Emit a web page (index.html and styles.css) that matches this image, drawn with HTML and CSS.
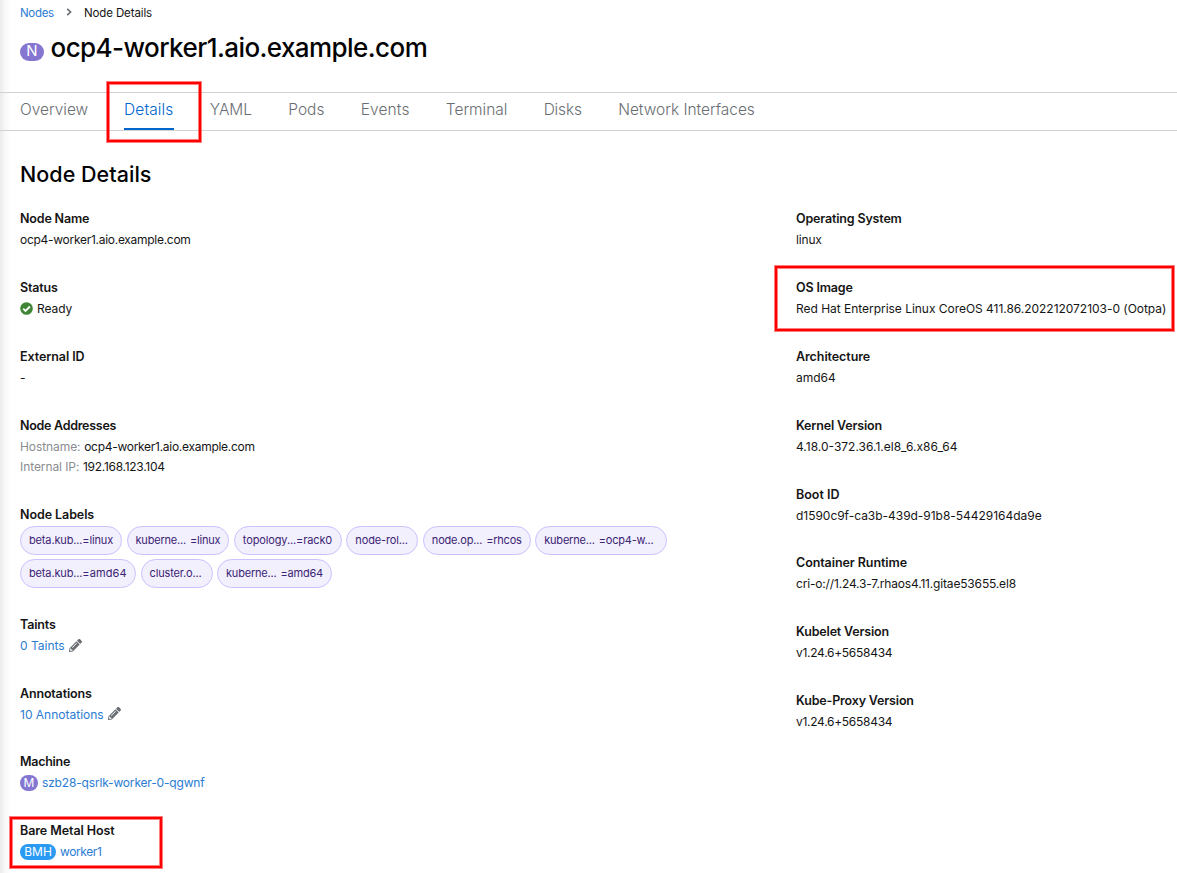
FILE: index.html
```html
<!DOCTYPE html>
<html lang="en">
<head>
<meta charset="utf-8">
<title>ocp4-worker1.aio.example.com - Details</title>
<link rel="stylesheet" href="styles.css">
</head>
<body>
<svg class="defs" width="0" height="0">
  <symbol id="pencil" viewBox="0 0 512 512"><path d="M497.9 142.1l-46.1 46.1c-4.7 4.7-12.3 4.7-17 0l-111-111c-4.7-4.7-4.7-12.3 0-17l46.1-46.1c18.7-18.7 49.1-18.7 67.9 0l60.1 60.1c18.8 18.7 18.8 49.1 0 67.9zM284.2 99.8L21.6 362.4.4 483.9c-2.9 16.4 11.4 30.6 27.8 27.8l121.5-21.3 262.6-262.6c4.7-4.7 4.7-12.3 0-17l-111-111c-4.8-4.7-12.4-4.7-17.1 0zM124.1 339.9c-5.5-5.5-5.5-14.3 0-19.8l154-154c5.5-5.5 14.3-5.5 19.8 0s5.5 14.3 0 19.8l-154 154c-5.5 5.5-14.3 5.5-19.8 0zM88 424h48v36.3l-64.5 11.3-31.1-31.1L51.7 376H88v48z"/></symbol>
</svg>
<main class="page">
  <nav class="breadcrumb">
    <a class="link">Nodes</a>
    <svg class="chevron" viewBox="0 0 6 8"><path d="M1.2 .8 4.6 4 1.2 7.2"/></svg>
    <span>Node Details</span>
  </nav>
  <header class="title">
    <span class="badge badge-lg">N</span>
    <h1>ocp4-worker1.aio.example.com</h1>
  </header>
  <nav class="tabs">
    <a class="tab">Overview</a>
    <a class="tab active">Details</a>
    <a class="tab">YAML</a>
    <a class="tab">Pods</a>
    <a class="tab events">Events</a>
    <a class="tab">Terminal</a>
    <a class="tab disks">Disks</a>
    <a class="tab">Network Interfaces</a>
  </nav>
  <h2>Node Details</h2>
  <div class="columns">
    <dl class="col-left">
      <div class="item"><dt>Node Name</dt><dd class="ls3">ocp4-worker1.aio.example.com</dd></div>
      <div class="item"><dt>Status</dt><dd class="ls1 row">
        <svg class="check" viewBox="0 0 13 13"><circle cx="6.5" cy="6.5" r="6.3"/><path d="M3.2 6.7 5.5 9 9.9 4.5"/></svg><span>Ready</span></dd></div>
      <div class="item"><dt class="ls1">External ID</dt><dd>-</dd></div>
      <div class="item addresses"><dt class="ls3">Node Addresses</dt>
        <dd><span class="muted ls1">Hostname:</span><span class="ls3">ocp4-worker1.aio.example.com</span></dd>
        <dd><span class="muted ls1">Internal IP:</span><span class="ls3">192.168.123.104</span></dd></div>
      <div class="item labels"><dt class="ls1">Node Labels</dt>
        <dd class="chips">
          <span class="chip"><b>beta.kub...</b><i>=linux</i></span>
          <span class="chip gap"><b>kuberne...</b><i>=linux</i></span>
          <span class="chip topology"><b>topology...</b><i>=rack0</i></span>
          <span class="chip wide"><b>node-rol...</b></span>
          <span class="chip gap"><b>node.op...</b><i>=rhcos</i></span>
          <span class="chip gap long"><b>kuberne...</b><i>=ocp4-w...</i></span>
        </dd>
        <dd class="chips">
          <span class="chip amd"><b>beta.kub...</b><i>=amd64</i></span>
          <span class="chip wide"><b>cluster.o...</b></span>
          <span class="chip gap"><b>kuberne...</b><i>=amd64</i></span>
        </dd></div>
      <div class="item"><dt>Taints</dt><dd class="row link">0 Taints<svg class="pencil"><use href="#pencil"/></svg></dd></div>
      <div class="item"><dt>Annotations</dt><dd class="row link">10 Annotations<svg class="pencil"><use href="#pencil"/></svg></dd></div>
      <div class="item"><dt class="ls3">Machine</dt><dd class="row"><span class="badge">M</span><a class="link ls2">szb28-qsrlk-worker-0-qgwnf</a></dd></div>
      <div class="item"><dt class="ls1">Bare Metal Host</dt><dd class="row"><span class="badge bmh">BMH</span><a class="link worker">worker1</a></dd></div>
    </dl>
    <dl class="col-right">
      <div class="item"><dt>Operating System</dt><dd class="ls2">linux</dd></div>
      <div class="item"><dt>OS Image</dt><dd class="os">Red Hat Enterprise Linux CoreOS 411.86.202212072103-0 (Ootpa)</dd></div>
      <div class="item"><dt class="ls1">Architecture</dt><dd>amd64</dd></div>
      <div class="item"><dt>Kernel Version</dt><dd>4.18.0-372.36.1.el8_6.x86_64</dd></div>
      <div class="item"><dt class="ls0">Boot ID</dt><dd class="os">d1590c9f-ca3b-439d-91b8-54429164da9e</dd></div>
      <div class="item"><dt class="ls1">Container Runtime</dt><dd class="ls2">cri-o://1.24.3-7.rhaos4.11.gitae53655.el8</dd></div>
      <div class="item"><dt>Kubelet Version</dt><dd class="ls3">v1.24.6+5658434</dd></div>
      <div class="item"><dt>Kube-Proxy Version</dt><dd class="ls3">v1.24.6+5658434</dd></div>
    </dl>
  </div>
  <div class="mark mark-tab"></div>
  <div class="mark mark-os"></div>
  <div class="mark mark-host"></div>
</main>
</body>
</html>
```
FILE: styles.css
```css
* { box-sizing: border-box; }
body { margin: 0; background: #fff; color: #151515; font: 12px/20.6px Inter, "Noto Sans", sans-serif; }
.defs { display: none; }
.page { position: relative; width: 1177px; height: 873px; overflow: hidden; background: linear-gradient(90deg, #ebebeb 0, #f8f8f8 5px, #fff 11px) 0 0 / 12px 100% no-repeat; }
.link { color: #2b7cd3; }
.breadcrumb { display: flex; align-items: center; height: 26px; padding-left: 20px; font-size: 11.5px; letter-spacing: -.12px; }
.breadcrumb .link { width: 46px; letter-spacing: -.3px; }
.chevron { width: 6px; height: 8px; margin: 0 12px 2px 0; fill: none; stroke: #6a6e73; stroke-width: 1.6; }
.title { display: flex; align-items: center; height: 66px; padding: 0 0 22px 20px; }
.title h1 { margin: 0 0 0 6.5px; font-size: 26px; font-weight: 450; line-height: 34px; letter-spacing: -.57px; color: #030303; }
.badge { display: inline-flex; align-items: center; justify-content: center; width: 18px; height: 16px; margin-bottom: 1px; border-radius: 8px; background: #8476d1; color: #fff; font-size: 12px; }
.badge-lg { width: 24px; height: 18px; margin: 7px 0 0; border-radius: 9px; font-size: 15px; }
.bmh { width: 36px; background: #2b9af3; }
.tabs { display: flex; gap: 36.3px; height: 39px; padding-left: 20px; border-top: 1px solid #d2d2d2; border-bottom: 1px solid #d2d2d2; font-size: 15.5px; font-weight: 300; letter-spacing: -.03px; color: #6a6e73; }
.tab { height: 37px; line-height: 34px; white-space: nowrap; }
.tab.active { width: 50px; margin: 0 -.5px; color: #06c; border-bottom: 2px solid #06c; font-weight: 350; letter-spacing: .12px; }
.tab.events { letter-spacing: .12px; }
.tab.disks { letter-spacing: -.15px; }
h2 { margin: 28px 0 0 20px; font-size: 21.5px; font-weight: 450; line-height: 30px; letter-spacing: .03px; color: #030303; }
.columns { display: grid; grid-template-columns: 776px 401px; padding-top: 19px; }
dl { margin: 0; padding-left: 20px; }
.item { height: 68.88px; }
dt { height: 22px; line-height: 21.5px; font-size: 12.5px; font-weight: 600; letter-spacing: -.17px; color: #151515; }
dd { margin: 0; height: 20.8px; line-height: 20.8px; white-space: nowrap; }
.row { display: flex; align-items: center; }
.addresses { height: 89px; }
.muted { margin-right: 3.7px; color: #8a8d90; }
.labels { height: 110px; }
.check { width: 13px; height: 13px; margin: 0 4px 2px 0; fill: #3e8635; }
.check path { fill: none; stroke: #fff; stroke-width: 1.9; }
.pencil { width: 13px; height: 13px; margin: 0 0 2px 4.5px; fill: #6a6e73; }
.badge + .link { margin-left: 4px; }
.chips { display: flex; gap: 4.5px; height: 33px; }
.chip { display: flex; align-items: center; height: 29px; padding: 0 8px; border: 1px solid #cbc1ff; border-radius: 15px; background: #f2f0fc; color: #3b2375; font-size: 11px; letter-spacing: -.15px; }
.chip b { font-weight: 400; }
.chip i { font-style: normal; }
.chip.gap { letter-spacing: -.2px; }
.chip.gap i { margin-left: 4px; }
.chip.topology { width: 108px; letter-spacing: -.13px; }
.chip.amd { width: 116px; }
.chip.amd i { letter-spacing: .1px; }
.chip.wide { width: 72px; }
.chip.long { width: 132px; }
.ls0 { letter-spacing: 0; }
.ls1 { letter-spacing: -.08px; }
.ls2 { letter-spacing: -.17px; }
.ls3 { letter-spacing: -.28px; }
.os { letter-spacing: -.03px; }
.worker { letter-spacing: -.4px; }
.mark { position: absolute; border: 2px solid #f00; box-shadow: 0 0 0 1px rgba(255, 0, 0, .5), inset 0 0 0 1px rgba(255, 0, 0, .5); }
.mark-tab { left: 107px; top: 82px; width: 94px; height: 60px; }
.mark-os { left: 775px; top: 266px; width: 399px; height: 65px; }
.mark-host { left: 10px; top: 817px; width: 152px; height: 51px; }
```
